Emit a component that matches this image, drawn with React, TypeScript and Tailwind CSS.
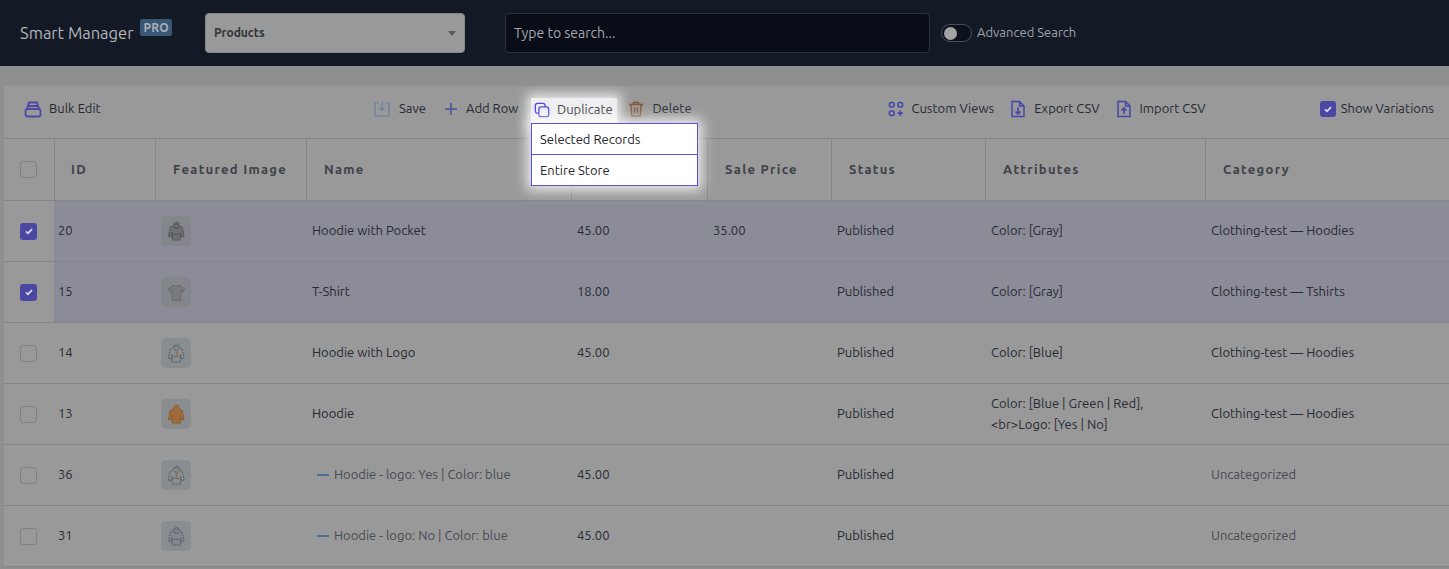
import React from "react";

const font = "font-['Ubuntu','Noto_Sans','Open_Sans',sans-serif]";
const cols = "grid grid-cols-[50px_101px_151px_265px_136px_124px_154px_220px_1fr]";

function Check({ on, small }: { on?: boolean; small?: boolean }) {
  return on ? (
    <span className={`flex items-center justify-center rounded-[3px] bg-[#4b48a4] ${small ? "h-[16px] w-[16px]" : "h-[17px] w-[17px]"}`}>
      <svg viewBox="0 0 16 16" className="h-3 w-3" fill="none" stroke="#d8d8e8" strokeWidth="2.4"><path d="M4 8.5l2.6 2.6L12 5.5" /></svg>
    </span>
  ) : (
    <span className="block h-[17px] w-[17px] rounded-[3px] border border-[#7f8287] bg-[#999999]" />
  );
}

const hoodiePath = "M7.5 3.5a2.5 2.5 0 0 1 5 0l1 2 2.5 1 2 9.5-2.5 1-1.5-5v8H5.5v-8L4 17l-2.5-1 2-9.5 2.5-1z";
const teePath = "M6.5 3.5l3.5 1 3.5-1 5 3.5-2 3.5-2-1v10h-9v-10l-2 1-2-3.5z";

function Thumb({ fill, line, logo, tee, bg, solid }: { fill: string; line: string; logo?: string; tee?: boolean; bg: string; solid?: boolean }) {
  return (
    <span className={`flex h-[30px] w-[30px] items-center justify-center rounded-[5px] ${bg}`}>
      <svg viewBox="0 0 20 22" className="h-[21px] w-[19px]">
        <path d={tee ? teePath : hoodiePath} fill={fill} stroke={line} strokeWidth="1" strokeDasharray={solid ? undefined : "1.5 1"} />
        {!tee && !solid && <path d="M8 3.5h4M7 6l3 2 3-2M7 14h6" fill="none" stroke={line} strokeWidth="1.2" strokeDasharray="1 1" />}
        {logo && <rect x="9.2" y="8.5" width="1.8" height="4" fill={logo} />}
      </svg>
    </span>
  );
}

type Row = {
  id: string; name: string; reg: string; sale: string; attr: string[]; cat: string;
  on?: boolean; variation?: boolean; fill: string; line: string; logo?: string; tee?: boolean; solid?: boolean;
};

const rows: Row[] = [
  { id: "20", name: "Hoodie with Pocket", reg: "45.00", sale: "35.00", attr: ["Color: [Gray]"], cat: "Clothing-test — Hoodies", on: true, fill: "#6e7073", line: "#3e4044" },
  { id: "15", name: "T-Shirt", reg: "18.00", sale: "", attr: ["Color: [Gray]"], cat: "Clothing-test — Tshirts", on: true, fill: "#7a7a7c", line: "#5a5a5e", tee: true },
  { id: "14", name: "Hoodie with Logo", reg: "45.00", sale: "", attr: ["Color: [Blue]"], cat: "Clothing-test — Hoodies", fill: "#8a8e91", line: "#4d5157", logo: "#9a6a3a" },
  { id: "13", name: "Hoodie", reg: "", sale: "", attr: ["Color: [Blue | Green | Red],", "<br>Logo: [Yes | No]"], cat: "Clothing-test — Hoodies", fill: "#a06c3c", line: "#8c5c30", solid: true },
  { id: "36", name: "Hoodie - logo: Yes | Color: blue", variation: true, reg: "45.00", sale: "", attr: [], cat: "Uncategorized", fill: "#8a8e91", line: "#4d5157", logo: "#9a6a3a" },
  { id: "31", name: "Hoodie - logo: No | Color: blue", variation: true, reg: "45.00", sale: "", attr: [], cat: "Uncategorized", fill: "#80878e", line: "#4d5157" },
];

const I = "h-[18px] w-[18px] shrink-0";

function ToolItem({ icon, label, gap = "gap-2" }: { icon: React.ReactNode; label: string; gap?: string }) {
  return (
    <span className={`flex items-center ${gap} text-[13px] text-[#262a33]`}>
      {icon}
      <span>{label}</span>
    </span>
  );
}

export default function App() {
  return (
    <div className={`${font} relative h-[569px] w-[1449px] overflow-hidden bg-[#8f8f8f]`}>
      <header className="flex h-[66px] items-center bg-[#131925]">
        <div className="ml-5 flex w-[185px] items-start">
          <span className="text-[16.5px] leading-6 text-[#b4b6ba]">Smart Manager</span>
          <span className="ml-[7px] mt-[-2px] rounded-[2px] bg-[#385676] px-[3px] text-xs font-bold leading-[17px] tracking-wide text-[#a7adb4]">PRO</span>
        </div>
        <div className="flex h-10 w-[260px] items-center justify-between rounded-[4px] border border-[#85878a] bg-[#999999] pl-2 pr-2 text-xs font-bold text-[#33343a]">
          Products
          <span className="h-0 w-0 border-x-[4px] border-t-[5px] border-x-transparent border-t-[#5a5a60]" />
        </div>
        <div className="ml-10 flex h-10 w-[425px] items-center rounded-[4px] border border-[#2c3340] bg-[#090d18] px-2 text-sm text-[#a5a7ab]">Type to search...</div>
        <span className="ml-[11px] flex h-[18px] w-[31px] items-center rounded-full border border-[#4a4f5c] bg-[#0d111c] pl-[2px]">
          <span className="h-[13px] w-[13px] rounded-full bg-[#a3a3a3]" />
        </span>
        <span className="ml-[5px] text-[13px] text-[#9ea1a6]">Advanced Search</span>
      </header>

      <main className="ml-1 mt-5 bg-[#999999]">
        <div className="relative flex h-[53px] items-center border-b border-[#858585] pb-[6px] text-[13px]">
          <div className="ml-5 flex w-[349px]">
            <ToolItem label="Bulk Edit" gap="gap-[7px]" icon={
              <svg viewBox="0 0 18 18" className={I} fill="none" stroke="#4b48a4" strokeWidth="1.8"><rect x="1.5" y="9" width="15" height="7.5" rx="2" /><path d="M3 9l2-6.5h8L15 9M4 6h10" /></svg>
            } />
          </div>
          <div className="flex items-center gap-[17px]">
            <ToolItem label="Save" icon={
              <svg viewBox="0 0 18 18" className={I} fill="none" stroke="#66809f" strokeWidth="1.2"><path d="M6 3H2v13h14V3h-4M9 2v8M6.5 8L9 10.5 11.5 8" /></svg>
            } />
            <ToolItem label="Add Row" icon={
              <svg viewBox="0 0 14 14" className="ml-px h-[14px] w-[14px]" fill="none" stroke="#43559b" strokeWidth="1.5"><path d="M7 1v12M1 7h12" /></svg>
            } />
            <span className="w-[75px]" />
            <ToolItem label="Delete" gap="gap-[7px]" icon={
              <svg viewBox="0 0 18 18" className={I} fill="none" stroke="#83583a" strokeWidth="1.5"><path d="M2 4.5h14M6.5 4V2.5h5V4M4 4.5l.7 11.5h8.6L14 4.5M7.5 7.5v6M10.5 7.5v6" /></svg>
            } />
          </div>
          <div className="ml-[196px] flex items-center gap-[15px]">
            <ToolItem label="Custom Views" icon={
              <svg viewBox="0 0 16 16" className="h-4 w-4" fill="none" stroke="#4647a8" strokeWidth="1.7"><rect x="1.5" y="1.5" width="4.5" height="4.5" rx="1.5" /><rect x="10" y="1.5" width="4.5" height="4.5" rx="1.5" /><rect x="1.5" y="10" width="4.5" height="4.5" rx="1.5" /><path d="M12.2 9.5v5.5M9.5 12.2h5.5" /></svg>
            } />
            <ToolItem label="Export CSV" gap="gap-[7px]" icon={
              <svg viewBox="0 0 16 18" className={I} fill="none" stroke="#4647a8" strokeWidth="1.5"><path d="M2 1.5h7.5L14 6v10.5H2zM9.5 1.5V6H14" /><path d="M8 7.5v6M5.5 11.5L8 14l2.5-2.5" strokeWidth="1.7" /></svg>
            } />
            <ToolItem label="Import CSV" gap="gap-[7px]" icon={
              <svg viewBox="0 0 16 18" className={I} fill="none" stroke="#4647a8" strokeWidth="1.5"><path d="M2 1.5h7.5L14 6v10.5H2zM9.5 1.5V6H14" /><path d="M8 14V8M5.5 10.5L8 8l2.5 2.5" strokeWidth="1.7" /></svg>
            } />
          </div>
          <div className="ml-auto mr-[15px] flex items-center gap-[5px] text-[#262a33]">
            <Check on small />
            <span>Show Variations</span>
          </div>

          <div className="absolute left-[527px] top-[12px] z-20 flex h-[26px] w-[86px] items-center gap-[7px] bg-[#eeeef0] pb-[2px] pl-[3px] text-[13px] text-[#3c3c44] shadow-[0_0_12px_4px_rgba(255,255,255,0.8)]">
            <svg viewBox="0 0 18 18" className="h-4 w-4" fill="none" stroke="#4f46e5" strokeWidth="1.5"><rect x="1.5" y="1.5" width="11" height="11" rx="2.5" /><rect x="5.5" y="5.5" width="11" height="11" rx="2.5" fill="#eeeef0" /></svg>
            Duplicate
          </div>
          <div className="absolute left-[527px] top-[37px] z-30 w-[167px] border border-[#5b50e8] bg-white text-[13px] text-[#26262c] shadow-[0_0_12px_4px_rgba(255,255,255,0.85)]">
            <div className="flex h-[31px] items-center border-b border-[#5b50e8] px-2 pt-px">Selected Records</div>
            <div className="flex h-[30px] items-center px-2 pt-px">Entire Store</div>
          </div>
        </div>

        <div className={`${cols} h-[62px] border-b border-[#858585] text-[13px] font-bold tracking-[1.3px] text-[#3f4149]`}>
          <div className="flex items-center pl-4"><Check /></div>
          {["ID", "Featured Image", "Name", "", "Sale Price", "Status", "Attributes", "Category"].map((h, i) => (
            <div key={i} className={`flex items-center border-l border-[#858585] ${i === 0 ? "pl-4" : "pl-[17px]"}`}>{h}</div>
          ))}
        </div>

        {rows.map((r) => {
          const hl = r.on ? "bg-[#8c8c98]" : "";
          const dim = r.variation ? "text-[#474a53]" : "";
          return (
            <div key={r.id} className={`${cols} h-[61px] border-b border-[#858585] text-[13px] text-[#262a33]`}>
              <div className="flex items-center pl-4"><Check on={r.on} /></div>
              <div className={`flex items-center pl-1 ${hl}`}>{r.id}</div>
              <div className={`flex items-center pl-[6px] ${hl}`}>
                <Thumb fill={r.fill} line={r.line} logo={r.logo} tee={r.tee} solid={r.solid} bg={r.on ? "bg-[#83878b]" : "bg-[#898d90]"} />
              </div>
              <div className={`flex items-center pl-[6px] ${hl} ${dim}`}>
                {r.variation && <span className="ml-[5px] mr-[5px] h-[2px] w-[12px] bg-[#4c6f96]" />}
                {r.name}
              </div>
              <div className={`flex items-center pl-[6px] ${hl}`}>{r.reg}</div>
              <div className={`flex items-center pl-[6px] ${hl}`}>{r.sale}</div>
              <div className={`flex items-center pl-[6px] ${hl}`}>Published</div>
              <div className={`flex flex-col justify-center pl-[6px] leading-[21px] ${hl} ${r.attr.length === 1 ? "pb-[2px]" : ""}`}>
                {r.attr.map((a) => <div key={a}>{a}</div>)}
              </div>
              <div className={`flex items-center pl-[6px] ${hl} ${dim}`}>{r.cat}</div>
            </div>
          );
        })}
      </main>
    </div>
  );
}
